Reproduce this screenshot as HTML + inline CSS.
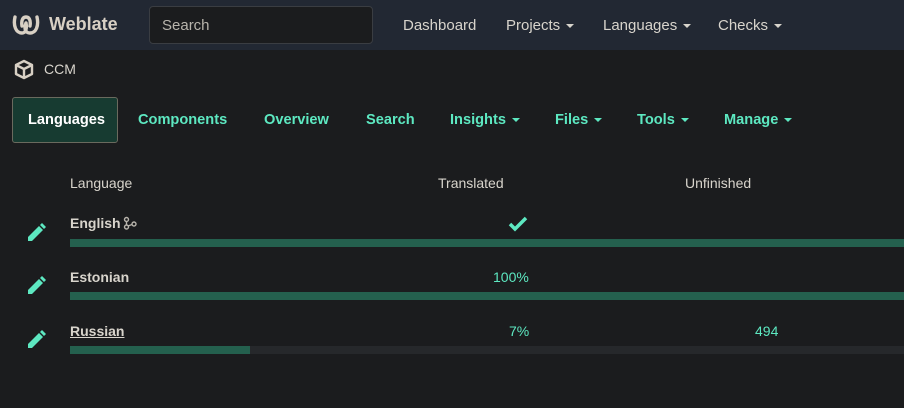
<!DOCTYPE html>
<html><head><style>
*{margin:0;padding:0;box-sizing:border-box}
body{width:904px;height:408px;background:#1b1c1e;font-family:"Liberation Sans",sans-serif;position:relative;overflow:hidden;color:#d8d4cc}
.a{position:absolute;white-space:nowrap}
.nav{position:absolute;left:0;top:0;width:904px;height:50px;background:#222833}
.t{font-size:15px;color:#d8d4cc}
.g{color:#5de8c1;font-weight:bold;font-size:14.6px}
.car{display:inline-block;width:0;height:0;border-left:4px solid transparent;border-right:4px solid transparent;border-top:4px solid currentColor;vertical-align:middle;margin-left:6px}
.bar{position:absolute;left:70px;width:834px;height:8px;background:#24604e}
.pen{position:absolute;left:27px}
</style></head><body>
<div class="nav"></div>
<svg class="a" style="left:12px;top:13px" width="28" height="24" viewBox="0 0 28 24"><path d="M3 4 C1 13 4 20 10 20 C14 20 15 15 14 10 M25 4 C27 13 24 20 18 20 C13 20 12 15 14 10 M10 13 C9 7 11 4 14 4 C17 4 19 7 18 13" fill="none" stroke="#d8d0c4" stroke-width="3.4" stroke-linecap="round"/></svg>
<div class="a" style="left:49px;top:14px;font-size:18px;font-weight:bold;color:#d8d0c4">Weblate</div>
<div class="a" style="left:149px;top:6px;width:224px;height:38px;background:#1b1c1e;border:1px solid #3a3d42;border-radius:4px"></div>
<div class="a t" style="left:162px;top:17px;color:#b8b4ac">Search</div>
<div class="a t" style="left:403px;top:17px">Dashboard</div>
<div class="a t" style="left:506px;top:17px">Projects<span class="car"></span></div>
<div class="a t" style="left:603px;top:17px">Languages<span class="car"></span></div>
<div class="a t" style="left:718px;top:17px">Checks<span class="car"></span></div>
<svg class="a" style="left:13px;top:59px" width="22" height="22" viewBox="0 0 22 22"><path d="M11 2 L19 6 L19 15 L11 19 L3 15 L3 6 Z M3 6 L11 10 L19 6 M11 10 L11 19" fill="none" stroke="#d8d0c4" stroke-width="2.4" stroke-linejoin="round"/></svg>
<div class="a t" style="left:44px;top:61px;font-size:14px">CCM</div>
<div class="a" style="left:12px;top:97px;width:106px;height:46px;background:#173b31;border:1px solid #6a6a5e;border-radius:3px"></div>
<div class="a" style="left:28px;top:112px;font-weight:bold;font-size:14.6px;color:#fff">Languages</div>
<div class="a g" style="left:138px;top:112px">Components</div>
<div class="a g" style="left:264px;top:112px">Overview</div>
<div class="a g" style="left:366px;top:112px">Search</div>
<div class="a g" style="left:450px;top:112px">Insights<span class="car"></span></div>
<div class="a g" style="left:555px;top:112px">Files<span class="car"></span></div>
<div class="a g" style="left:637px;top:112px">Tools<span class="car"></span></div>
<div class="a g" style="left:724px;top:112px">Manage<span class="car"></span></div>
<div class="a t" style="left:70px;top:175px;font-size:14px">Language</div>
<div class="a t" style="left:438px;top:175px;font-size:14px">Translated</div>
<div class="a t" style="left:685px;top:175px;font-size:14px">Unfinished</div>
<svg class="pen" style="top:222px" width="20" height="20" viewBox="0 0 20 20"><path d="M1 19 L1 15 L12 4 L16 8 L5 19 Z M13 3 L15 1 L19 5 L17 7 Z" fill="#5de8c1"/></svg>
<svg class="pen" style="top:275px" width="20" height="20" viewBox="0 0 20 20"><path d="M1 19 L1 15 L12 4 L16 8 L5 19 Z M13 3 L15 1 L19 5 L17 7 Z" fill="#5de8c1"/></svg>
<svg class="pen" style="top:329px" width="20" height="20" viewBox="0 0 20 20"><path d="M1 19 L1 15 L12 4 L16 8 L5 19 Z M13 3 L15 1 L19 5 L17 7 Z" fill="#5de8c1"/></svg>
<div class="a" style="left:70px;top:215px;font-size:14px;font-weight:bold">English</div>
<svg class="a" style="left:123px;top:216px" width="14" height="14" viewBox="0 0 14 14"><circle cx="3.5" cy="3.5" r="2" fill="none" stroke="#b8b4ac" stroke-width="1.4"/><circle cx="3.5" cy="11" r="2" fill="none" stroke="#b8b4ac" stroke-width="1.4"/><circle cx="11" cy="8" r="2" fill="none" stroke="#b8b4ac" stroke-width="1.4"/><path d="M3.5 5.5 L3.5 9 M5 10 L9 8.5" stroke="#b8b4ac" stroke-width="1.4"/></svg>
<svg class="a" style="left:508px;top:216px" width="20" height="16" viewBox="0 0 20 16"><path d="M2 8 L7 13 L18 2" fill="none" stroke="#5de8c1" stroke-width="3.5"/></svg>
<div class="bar" style="top:239px"></div>
<div class="a" style="left:70px;top:269px;font-size:14px;font-weight:bold">Estonian</div>
<div class="a g" style="left:493px;top:269px;font-size:14px;font-weight:normal">100%</div>
<div class="bar" style="top:292px"></div>
<div class="a" style="left:70px;top:323px;font-size:14px;font-weight:bold;text-decoration:underline">Russian</div>
<div class="a g" style="left:509px;top:323px;font-size:14px;font-weight:normal">7%</div>
<div class="a g" style="left:755px;top:323px;font-size:14px;font-weight:normal">494</div>
<div class="bar" style="top:346px;background:#26282b"></div>
<div class="bar" style="top:346px;width:180px"></div>
</body></html>
